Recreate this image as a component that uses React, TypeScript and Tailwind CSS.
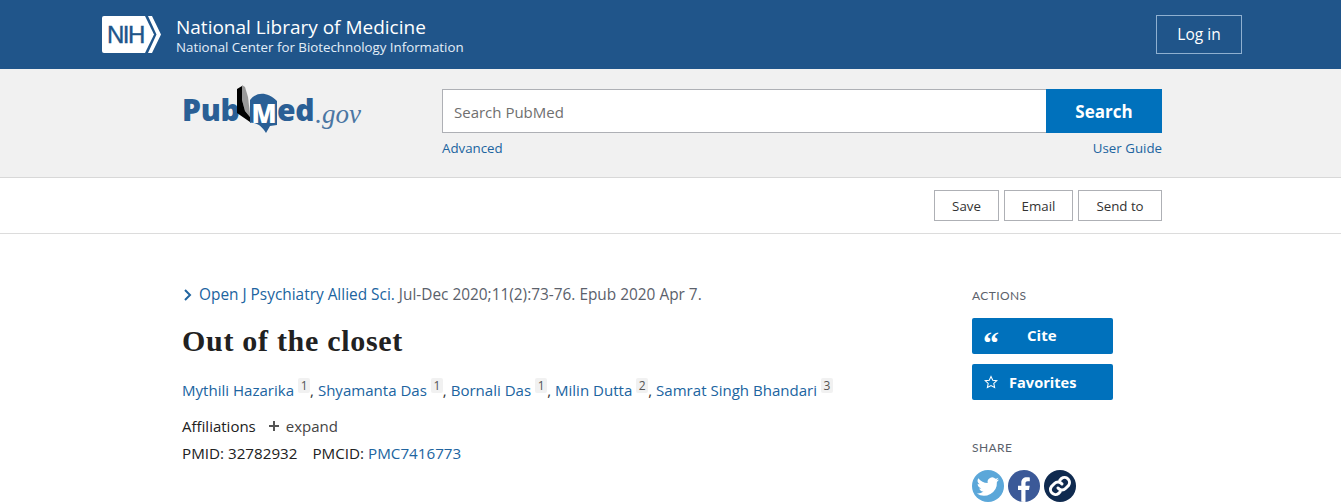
const font = "font-['Open_Sans',sans-serif]"

function NihLogo() {
  return (
    <div className="relative w-[59px] h-[37px]">
      <svg width="59" height="37" viewBox="0 0 59 37" className="block">
        <path d="M2 0 H43 L52 18.500 L43 37 H2 Q0 37 0 35 V2 Q0 0 2 0 Z" fill="#fff" />
        <path d="M46 0 H50 L59 18.500 L50 37 H46 L54.500 18.500 Z" fill="#fff" />
      </svg>
      <span className="absolute left-[5px] top-[7px] font-['Liberation_Sans',sans-serif] text-[24px] leading-[24px] tracking-[-1.500px] text-[#20558a] [-webkit-text-stroke:0.4px_#20558a]">NIH</span>
    </div>
  )
}

function PubMedLogo() {
  return (
    <div className="flex items-start h-[50px] w-[180px] text-[#2a5f95] font-['Open_Sans',sans-serif] font-extrabold text-[30px] leading-[34px]">
      <span className="mt-[9px] tracking-[-0.300px] w-[54px]">Pub</span>
      <svg width="42" height="50" viewBox="0 0 42 50" className="shrink-0">
        <path d="M6 1 L9 3 L12 13 L14 30 L14 33 L9 27 L6 16 Z" fill="#999" />
        <path d="M1 5 L6 2 L6 16 L9 27 L14 33 L14 38 L1 29 Z" fill="#000" />
        <path d="M14 16 C20 8 31 7 41 17 L41 41 L34 42 L30 49 C26 42 20 38 14 39 Z" fill="#2a5f95" />
        <text x="15.500" y="38.500" fontFamily="Open Sans" fontWeight="800" fontSize="26" fill="#fff">M</text>
      </svg>
      <span className="mt-[9px] -ml-[1px] tracking-[-0.300px]">ed</span>
      <span className="mt-[13px] ml-[1px] font-['Liberation_Serif',serif] italic font-normal text-[27px] text-[#4a76a3]">.gov</span>
    </div>
  )
}

function Sup({ n }: { n: number }) {
  return <sup className="inline-block w-[12px] text-center bg-[#f1f1f1] text-[#555] text-[12px] leading-[15px] ml-[4px] rounded-[2px] align-baseline relative -top-[6px]">{n}</sup>
}

function Author({ name, n, last }: { name: string; n: number; last?: boolean }) {
  return (
    <>
      <a className="text-[#20649f]">{name}</a>
      <Sup n={n} />
      {!last && <span className="text-[#333]">, </span>}
    </>
  )
}

export default function App() {
  return (
    <div className={`${font} h-[504px] overflow-hidden bg-white text-[#212121] text-[15px]`}>
      {/* NIH bar */}
      <header className="h-[69px] bg-[#20558a] pl-[102px] pr-[99px] flex items-center justify-between">
        <div className="flex items-center gap-[15px]">
          <NihLogo />
          <div className="text-white">
            <div className="text-[19px] leading-[24px]">National Library of Medicine</div>
            <div className="text-[13.300px] leading-[16px] text-[#e3eef8]">National Center for Biotechnology Information</div>
          </div>
        </div>
        <button className="w-[86px] h-[39px] border border-[#8fb0d0] text-white text-[15.500px]">Log in</button>
      </header>

      {/* search band */}
      <section className="h-[109px] bg-[#f1f1f1] border-b border-[#d8d8d8] pl-[182px] pr-[179px] pt-[15px] flex">
        <div className="w-[260px] shrink-0"><PubMedLogo /></div>
        <div className="flex-1 pt-[5px]">
          <div className="flex h-[44px]">
            <div className="flex-1 bg-white border border-[#aeb0b5] border-r-0 pl-[11px] pt-[2px] flex items-center text-[15px] text-[#6f6f6f]">Search PubMed</div>
            <button className="w-[116px] bg-[#0071bc] text-white font-bold text-[17px] pt-[1px]">Search</button>
          </div>
          <div className="flex justify-between mt-[6px] text-[13.300px] leading-[18px] text-[#20649f]">
            <a>Advanced</a>
            <a>User Guide</a>
          </div>
        </div>
      </section>

      {/* actions bar */}
      <section className="h-[56px] border-b border-[#dcdcdc] pr-[179px] flex justify-end items-center gap-[5px] text-[13.300px] text-[#333]">
        <button className="w-[65px] h-[31px] border border-[#aeb0b5] pt-[2px]">Save</button>
        <button className="w-[69px] h-[31px] border border-[#aeb0b5] pt-[2px]">Email</button>
        <button className="w-[84px] h-[31px] border border-[#aeb0b5] pt-[2px]">Send to</button>
      </section>

      {/* article */}
      <main className="flex pl-[182px] pt-[51px]">
        <div className="w-[790px] shrink-0">
          <div className="flex items-center text-[15.400px] leading-[20px] text-[#5b616b]">
            <svg width="11" height="14" viewBox="0 0 11 14" className="mr-[6px]">
              <path d="M3 2 L8 7 L3 12" fill="none" stroke="#20649f" strokeWidth="2" />
            </svg>
            <a className="text-[#20649f]">Open J Psychiatry Allied Sci.</a>
            <span className="ml-[4px]">Jul-Dec 2020;11(2):73-76. Epub 2020 Apr 7.</span>
          </div>
          <h1 className="mt-[16px] font-['Liberation_Serif',serif] font-bold text-[30px] tracking-[0.700px] leading-[40px] text-[#212121]">Out of the closet</h1>
          <div className="mt-[19px] text-[15.050px] leading-[20px]">
            <Author name="Mythili Hazarika" n={1} />
            <Author name="Shyamanta Das" n={1} />
            <Author name="Bornali Das" n={1} />
            <Author name="Milin Dutta" n={2} />
            <Author name="Samrat Singh Bhandari" n={3} last />
          </div>
          <div className="mt-[16px] flex items-center text-[15px] leading-[20px]">
            <span>Affiliations</span>
            <svg width="12" height="12" viewBox="0 0 12 12" className="ml-[12px] mr-[6px]">
              <path d="M6 1 V11 M1 6 H11" stroke="#555" strokeWidth="2" />
            </svg>
            <span className="text-[#444]">expand</span>
          </div>
          <div className="mt-[7px] text-[15.200px] leading-[20px]">
            <span>PMID: 32782932</span>
            <span className="ml-[15px]">PMCID: </span>
            <a className="text-[#20649f]">PMC7416773</a>
          </div>
          <h2 className="mt-[34px] font-['Liberation_Serif',serif] font-bold text-[24px] leading-[30px]">Abstract</h2>
        </div>

        <aside className="w-[141px] shrink-0">
          <div className="font-['Lato',sans-serif] text-[12px] leading-[16px] text-[#5b616b] tracking-[0.400px] mt-[3px]">ACTIONS</div>
          <button className="mt-[14px] w-full h-[36px] bg-[#0071bc] rounded-[2px] text-white font-bold text-[15px] flex items-center pl-[11px] pb-[1px] relative">
            <span className="font-['Liberation_Serif',serif] text-[32px] leading-none h-[18px] font-bold">“</span>
            <span className="ml-[28px]">Cite</span>
          </button>
          <button className="mt-[10px] w-full h-[36px] bg-[#0071bc] rounded-[2px] text-white font-bold text-[14.600px] flex items-center pl-[12px]">
            <svg width="14" height="14" viewBox="0 0 24 24" fill="none" stroke="#fff" strokeWidth="1.800">
              <path d="M12 2.500 L15 9 L22 9.800 L16.800 14.500 L18.200 21.500 L12 18 L5.800 21.500 L7.200 14.500 L2 9.800 L9 9 Z" />
            </svg>
            <span className="ml-[11px] pt-[1px]">Favorites</span>
          </button>
          <div className="font-['Lato',sans-serif] mt-[40px] text-[12px] leading-[16px] text-[#5b616b] tracking-[0.400px]">SHARE</div>
          <div className="mt-[14px] flex gap-[4px]">
            <div className="w-[32px] h-[32px] rounded-full bg-[#5ba7d9] flex items-center justify-center">
              <svg width="24" height="24" viewBox="0 0 24 24" fill="#fff">
                <path d="M23 5.500c-.8.4-1.700.6-2.600.7.900-.6 1.600-1.400 2-2.500-.9.5-1.900.9-2.900 1.100A4.600 4.600 0 0 0 11.700 9 13 13 0 0 1 2.300 4.200a4.600 4.600 0 0 0 1.400 6.100c-.7 0-1.400-.2-2.100-.6 0 2.300 1.600 4.200 3.700 4.600-.7.200-1.400.2-2.100.1.600 1.900 2.300 3.200 4.300 3.200A9.200 9.200 0 0 1 .8 19.500 13 13 0 0 0 20.900 7.900c.8-.6 1.600-1.400 2.100-2.400z" />
              </svg>
            </div>
            <div className="w-[32px] h-[32px] rounded-full bg-[#3b5998] flex items-end justify-center overflow-hidden">
              <svg width="22" height="28" viewBox="0 0 22 28" fill="#fff">
                <path d="M12.500 28 V16 H16 L16.700 11.800 H12.500 V9.300 C12.500 8 13 7.200 14.700 7.200 H16.800 V3.400 C16 3.300 15 3.200 13.800 3.200 C10.500 3.200 8.300 5.200 8.300 8.800 V11.800 H5 V16 H8.300 V28 Z" />
              </svg>
            </div>
            <div className="w-[32px] h-[32px] rounded-full bg-[#0f2a4f] flex items-center justify-center">
              <svg width="24" height="24" viewBox="0 0 24 24" fill="none" stroke="#fff" strokeWidth="3" strokeLinecap="round">
                <path d="M10 14a5 5 0 0 0 7.500.5l3-3a5 5 0 0 0-7-7l-1.700 1.700" />
                <path d="M14 10a5 5 0 0 0-7.500-.5l-3 3a5 5 0 0 0 7 7l1.700-1.700" />
              </svg>
            </div>
          </div>
        </aside>
      </main>
    </div>
  )
}
